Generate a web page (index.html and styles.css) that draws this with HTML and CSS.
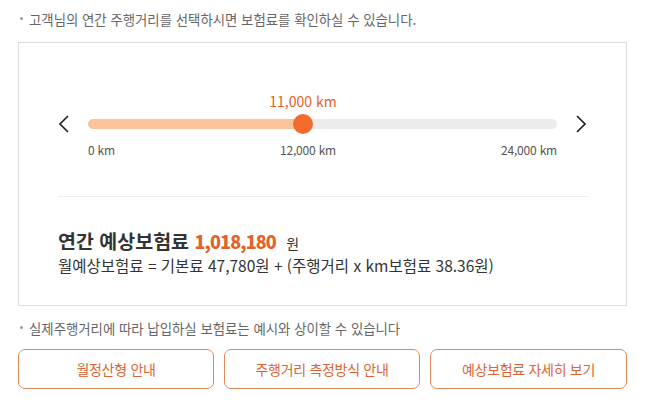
FILE: index.html
```html
<!DOCTYPE html>
<html lang="ko">
<head>
<meta charset="utf-8">
<link rel="stylesheet" href="styles.css">
</head>
<body>
<div class="page">
  <p class="note">고객님의 연간 주행거리를 선택하시면 보험료를 확인하실 수 있습니다.</p>
  <div class="box">
    <div class="slider">
      <div class="value-row"><span class="value" style="left: 45.83%">11,000 km</span></div>
      <div class="track-row">
        <button class="arrow" aria-label="이전">
          <svg width="12" height="18" viewBox="0 0 12 18"><path d="M10 1 L2 9 L10 17" fill="none" stroke="#222" stroke-width="1.7"/></svg>
        </button>
        <div class="track">
          <div class="fill" style="width: 45.83%"></div>
          <div class="thumb" style="left: 45.83%"></div>
        </div>
        <button class="arrow" aria-label="다음">
          <svg width="12" height="18" viewBox="0 0 12 18"><path d="M2 1 L10 9 L2 17" fill="none" stroke="#222" stroke-width="1.7"/></svg>
        </button>
      </div>
      <div class="ticks">
        <span>0 km</span>
        <span>12,000 km</span>
        <span>24,000 km</span>
      </div>
    </div>
    <div class="result">
      <p class="total">연간 예상보험료 <strong>1,018,180</strong> <span class="won">원</span></p>
      <p class="formula">월예상보험료 = 기본료 47,780원 + (주행거리 x km보험료 38.36원)</p>
    </div>
  </div>
  <p class="note note-bottom">실제주행거리에 따라 납입하실 보험료는 예시와 상이할 수 있습니다</p>
  <div class="buttons">
    <button class="btn">월정산형 안내</button>
    <button class="btn">주행거리 측정방식 안내</button>
    <button class="btn">예상보험료 자세히 보기</button>
  </div>
</div>
</body>
</html>
```

FILE: styles.css
```css
* { box-sizing: border-box; }
html, body { margin: 0; padding: 0; background: #fff; }
body {
  font-family: "Noto Sans CJK KR", "Noto Sans", sans-serif;
  color: #333;
}
.page {
  width: 654px;
  padding: 9px 27px 0 18px;
}
.note {
  position: relative;
  margin: 0;
  padding-left: 11px;
  font-size: 13.4px;
  line-height: 20px;
  color: #666;
}
.note::before {
  content: "";
  position: absolute;
  left: 2px;
  top: 8px;
  width: 3px;
  height: 3px;
  border-radius: 50%;
  background: #999;
}
.box {
  margin-top: 13px;
  height: 264px;
  border: 1px solid #ddd;
  padding: 0 39px;
}
.slider {
  padding-top: 48px;
  height: 154px;
  border-bottom: 1px solid #eee;
}
.value-row {
  position: relative;
  height: 20px;
  margin: 0 30px;
}
.value {
  position: absolute;
  transform: translateX(-50%);
  top: 0;
  font-size: 14px;
  line-height: 20px;
  color: #e2622a;
  white-space: nowrap;
}
.track-row {
  display: flex;
  align-items: center;
  height: 26px;
}
.arrow {
  width: 30px;
  height: 26px;
  padding: 0;
  border: 0;
  background: none;
  display: flex;
  align-items: center;
}
.arrow:last-child { justify-content: flex-end; }
.track {
  position: relative;
  flex: 1;
  height: 10px;
  border-radius: 5px;
  background: #ececec;
}
.fill {
  height: 100%;
  border-radius: 5px;
  background: #fdc39d;
}
.thumb {
  position: absolute;
  top: 50%;
  width: 20px;
  height: 20px;
  border-radius: 50%;
  background: #f26b2d;
  transform: translate(-50%, -50%);
}
.ticks {
  display: flex;
  justify-content: space-between;
  margin: 5px 30px 0;
  font-size: 12px;
  line-height: 16px;
  color: #555;
  letter-spacing: -0.2px;
}
.result {
  padding-top: 32px;
}
.total {
  margin: 0;
  font-size: 19.5px;
  line-height: 24px;
  font-weight: 700;
  color: #333;
}
.total strong {
  color: #e2622a;
  font-size: 18px;
  letter-spacing: -0.9px;
}
.won {
  font-weight: 400;
  font-size: 14px;
  margin-left: 5px;
}
.formula {
  margin: 0;
  font-size: 15.5px;
  line-height: 20px;
  color: #333;
}
.note-bottom {
  margin-top: 12px;
}
.buttons {
  display: grid;
  grid-template-columns: 196px 196px 197px;
  gap: 10px;
  margin-top: 11px;
}
.btn {
  height: 40px;
  border: 1px solid #e08a5c;
  border-radius: 7px;
  background: #fff;
  color: #dc6434;
  font-family: inherit;
  font-size: 14px;
  letter-spacing: -0.3px;
  padding: 0;
}
```
